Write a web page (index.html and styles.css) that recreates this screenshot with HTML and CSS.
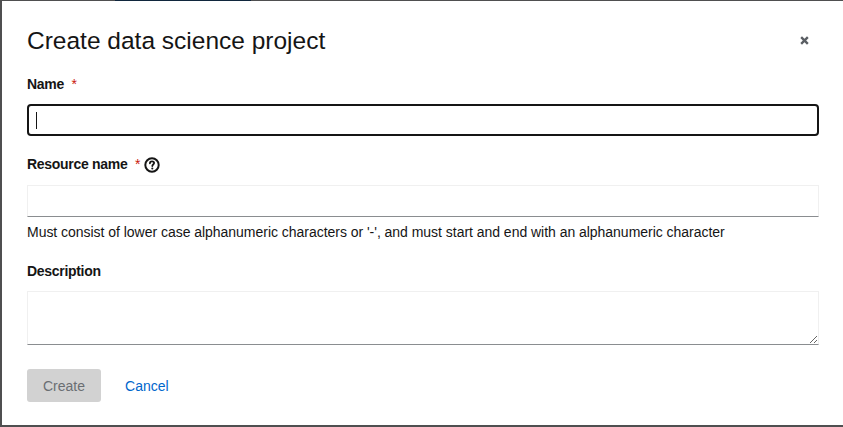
FILE: index.html
```html
<!DOCTYPE html>
<html lang="en">
<head>
<meta charset="utf-8">
<title>Create data science project</title>
<link rel="stylesheet" href="styles.css">
</head>
<body>
<div class="backdrop">
  <div class="page-edge">
    <span class="seg seg-gray"></span>
    <span class="seg seg-navy"></span>
    <span class="seg seg-gray2"></span>
  </div>
  <div class="stage">
    <div class="modal" role="dialog" aria-labelledby="modal-title">
      <header class="modal-header">
        <h1 id="modal-title" class="modal-title">Create data science project</h1>
        <button class="close-btn" aria-label="Close">
          <svg viewBox="0 0 10 10" width="10" height="10" aria-hidden="true">
            <path d="M1.3 1.3 L8.7 8.7 M8.7 1.3 L1.3 8.7" stroke="#5a5e63" stroke-width="2.6" stroke-linecap="butt"/>
          </svg>
        </button>
      </header>
      <form class="form">
        <div class="form-group">
          <label class="form-label">Name <span class="req">*</span></label>
          <div class="text-input focused"><span class="caret"></span></div>
        </div>
        <div class="form-group">
          <label class="form-label label-tall">Resource name <span class="req">*</span>
            <svg class="help-icon" viewBox="0 0 16 16" width="16" height="16" aria-hidden="true">
              <circle cx="8" cy="8" r="6.7" fill="none" stroke="#151515" stroke-width="2"/>
              <path d="M5.9 6.3 C5.9 4.9 6.9 4.3 8 4.3 C9.2 4.3 10.1 5 10.1 6.1 C10.1 7.5 8.3 7.6 8.3 9.1" fill="none" stroke="#151515" stroke-width="1.8" stroke-linecap="round"/>
              <circle cx="8.3" cy="11.5" r="1.05" fill="#151515"/>
            </svg>
          </label>
          <div class="text-input"></div>
          <div class="helper">Must consist of lower case alphanumeric characters or '-', and must start and end with an alphanumeric character</div>
        </div>
        <div class="form-group">
          <label class="form-label">Description</label>
          <textarea class="textarea"></textarea>
        </div>
        <div class="actions">
          <button type="button" class="btn btn-disabled">Create</button>
          <button type="button" class="btn-link">Cancel</button>
        </div>
      </form>
    </div>
  </div>
</div>
</body>
</html>
```
FILE: styles.css
```css
* { box-sizing: border-box; }
html, body { margin: 0; padding: 0; }
body {
  width: 843px;
  height: 427px;
  overflow: hidden;
  background: #4f4f50;
  font-family: "Liberation Sans", Arial, sans-serif;
  color: #151515;
}
.backdrop { display: flex; flex-direction: column; height: 427px; }
.page-edge { display: flex; height: 1px; flex: none; }
.seg { display: block; height: 1px; }
.seg-gray { width: 115px; background: #4f4f50; }
.seg-navy { width: 136px; background: #10263d; }
.seg-gray2 { flex: 1; background: #4f4f50; }
.stage { display: flex; padding-left: 2px; }
.modal {
  flex: 1 1 auto;
  background: #fff;
  height: 424px;
  padding: 24px 24px 0 25px;
}
.modal-header { display: flex; justify-content: space-between; align-items: center; }
.modal-title {
  margin: 0;
  font-family: "Liberation Sans", Arial, sans-serif;
  font-weight: 400;
  font-size: 24.5px;
  line-height: 31px;
  color: #151515;
}
.close-btn {
  width: 30px; height: 31px;
  border: 0; background: none; padding: 0;
  display: flex; align-items: center; justify-content: center;
}
.close-btn svg { width: 9px; height: 9px; }
.form { margin-top: 18px; display: flex; flex-direction: column; }
.form-group { display: flex; flex-direction: column; margin-bottom: 18px; }
.form-label {
  font-size: 14px;
  line-height: 21px;
  font-weight: 700;
  letter-spacing: -0.3px;
  margin-bottom: 9px;
  display: flex; align-items: center;
  white-space: pre;
}
.label-tall { margin-bottom: 10px; }
.req { color: #c9190b; margin-left: 4px; font-weight: 400; }
.help-icon { margin-left: 4px; }
.text-input {
  height: 32px;
  border: 1px solid #f0f0f0;
  border-bottom-color: #8a8d90;
  background: #fff;
  position: relative;
}
.text-input.focused {
  border: 2px solid #151515;
  border-radius: 4px;
}
.caret {
  position: absolute;
  left: 7px; top: 6px;
  width: 1px; height: 17px;
  background: #151515;
}
.helper { margin-top: 5px; font-size: 14px; line-height: 21px; color: #151515; letter-spacing: -0.03px; }
.textarea {
  display: block;
  width: 100%;
  height: 54px;
  margin: 0;
  border: 1px solid #f0f0f0;
  border-bottom-color: #8a8d90;
  resize: vertical;
  font: inherit;
}
.actions { display: flex; align-items: center; gap: 24px; margin-top: 6px; }
.btn {
  font-family: inherit;
  font-size: 14px;
  height: 33px;
  padding: 0 16px;
  border: 0;
  border-radius: 3px;
}
.btn-disabled { background: #d2d2d2; color: #6a6e73; }
.btn-link {
  font-family: inherit; font-size: 14px;
  border: 0; background: none; padding: 0; color: #0066cc;
}
```
